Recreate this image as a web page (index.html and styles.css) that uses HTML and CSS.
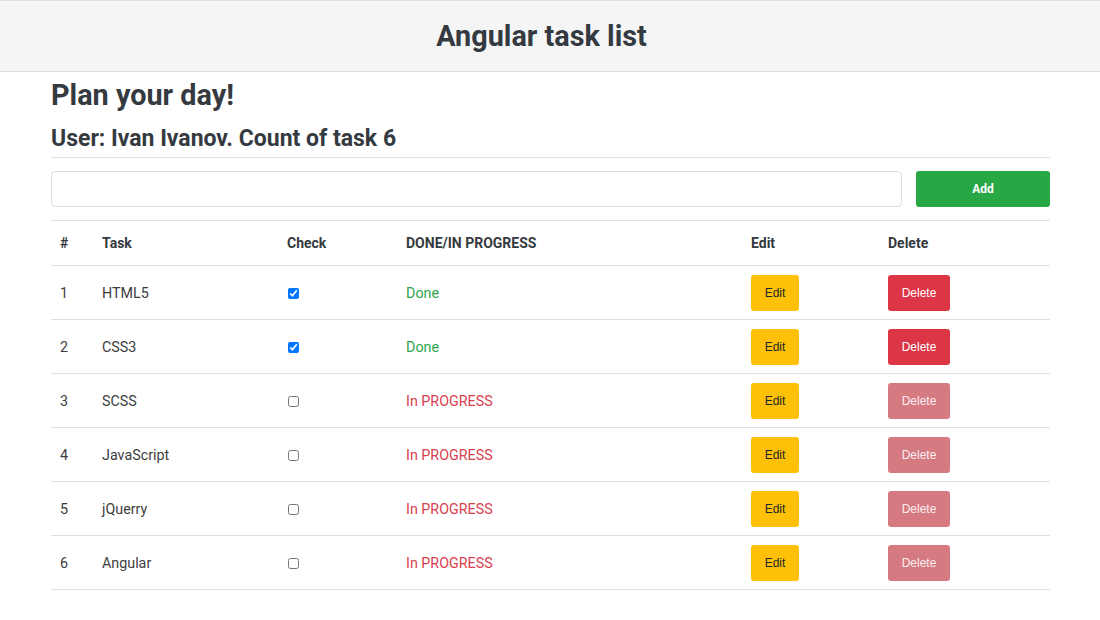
FILE: index.html
```html
<!DOCTYPE html>
<html>
<head>
<meta charset="utf-8">
<link rel="stylesheet" href="styles.css">
</head>
<body>
<header class="topbar">
  <h1 class="app-title">Angular task list</h1>
</header>
<main class="container">
  <h1 class="plan">Plan your day!</h1>
  <h2 class="user">User: Ivan Ivanov. Count of task 6</h2>
  <hr class="sep">
  <form class="add-form">
    <input class="task-input" type="text">
    <button class="btn btn-add" type="button">Add</button>
  </form>
  <table class="tasks">
    <thead>
      <tr><th class="c-num">#</th><th class="c-task">Task</th><th class="c-check">Check</th><th class="c-status">DONE/IN PROGRESS</th><th class="c-edit">Edit</th><th class="c-del">Delete</th></tr>
    </thead>
    <tbody>
      <tr><td>1</td><td>HTML5</td><td><input type="checkbox" class="chk" checked></td><td class="done">Done</td><td><button class="btn btn-edit">Edit</button></td><td><button class="btn btn-del">Delete</button></td></tr>
      <tr><td>2</td><td>CSS3</td><td><input type="checkbox" class="chk" checked></td><td class="done">Done</td><td><button class="btn btn-edit">Edit</button></td><td><button class="btn btn-del">Delete</button></td></tr>
      <tr><td>3</td><td>SCSS</td><td><input type="checkbox" class="chk"></td><td class="prog">In PROGRESS</td><td><button class="btn btn-edit">Edit</button></td><td><button class="btn btn-del" disabled>Delete</button></td></tr>
      <tr><td>4</td><td>JavaScript</td><td><input type="checkbox" class="chk"></td><td class="prog">In PROGRESS</td><td><button class="btn btn-edit">Edit</button></td><td><button class="btn btn-del" disabled>Delete</button></td></tr>
      <tr><td>5</td><td>jQuerry</td><td><input type="checkbox" class="chk"></td><td class="prog">In PROGRESS</td><td><button class="btn btn-edit">Edit</button></td><td><button class="btn btn-del" disabled>Delete</button></td></tr>
      <tr><td>6</td><td>Angular</td><td><input type="checkbox" class="chk"></td><td class="prog">In PROGRESS</td><td><button class="btn btn-edit">Edit</button></td><td><button class="btn btn-del" disabled>Delete</button></td></tr>
    </tbody>
  </table>
</main>
</body>
</html>
```
FILE: styles.css
```css
* { box-sizing: border-box; }
body {
  margin: 0;
  font-family: Roboto, "Liberation Sans", sans-serif;
  color: #212529;
  background: #fff;
}
.topbar {
  height: 72px;
  padding-right: 17px;
  background: #f5f5f5;
  border-top: 1px solid #e0e0e0;
  border-bottom: 1px solid #dedede;
  display: flex;
  align-items: center;
  justify-content: center;
}
.app-title {
  margin: 0;
  font-size: 28.8px;
  font-weight: 700;
  color: #343a40;
}
.container {
  width: 999px;
  margin: 0 0 0 51px;
}
.plan {
  margin: 6px 0 0;
  font-size: 28.8px;
  line-height: 34px;
  font-weight: 700;
  color: #343a40;
}
.user {
  margin: 13px 0 0;
  font-size: 23px;
  line-height: 28px;
  font-weight: 700;
  color: #343a40;
}
.sep {
  margin: 4px 0 0;
  border: 0;
  border-top: 1px solid #e0e0e0;
}
.add-form {
  display: flex;
  gap: 14px;
  margin-top: 13px;
}
.task-input {
  flex: 1;
  height: 36px;
  border: 1px solid #dedede;
  border-radius: 4px;
  font: inherit;
}
.btn {
  border: 0;
  border-radius: 3px;
  font-family: "Liberation Sans", Arial, sans-serif;
  font-size: 12px;
  height: 36px;
  cursor: pointer;
}
.btn-add {
  width: 134px;
  background: #28a745;
  color: #fff;
  font-weight: 700;
  font-family: Roboto, sans-serif;
}
.tasks {
  width: 100%;
  margin-top: 13px;
  border-collapse: collapse;
  font-size: 14px;
}
.tasks th {
  height: 45px;
  padding: 0 0 0 9px;
  text-align: left;
  font-size: 14px;
  font-weight: 700;
  color: #343a40;
  border-top: 1px solid #e0e0e0;
  border-bottom: 1px solid #e0e0e0;
}
.tasks td {
  height: 54px;
  padding: 0 0 0 9px;
  border-bottom: 1px solid #e0e0e0;
  color: #3d3d3d;
  font-size: 14.3px;
}
.c-num { width: 42px; }
.c-task { width: 185px; }
.c-check { width: 119px; }
.c-status { width: 345px; }
.c-edit { width: 137px; }
.chk {
  margin: 0 0 0 1px;
  width: 11px;
  height: 11px;
  vertical-align: middle;
}
.done { color: #2ea44f !important; }
.prog { color: #d9404e !important; }
.btn-edit {
  width: 48px;
  background: #ffc107;
  color: #212529;
}
.btn-del {
  width: 62px;
  background: #dc3545;
  color: #fff;
}
.btn-del:disabled {
  background: #d67a82;
  color: #fbeef0;
  cursor: default;
}
```
